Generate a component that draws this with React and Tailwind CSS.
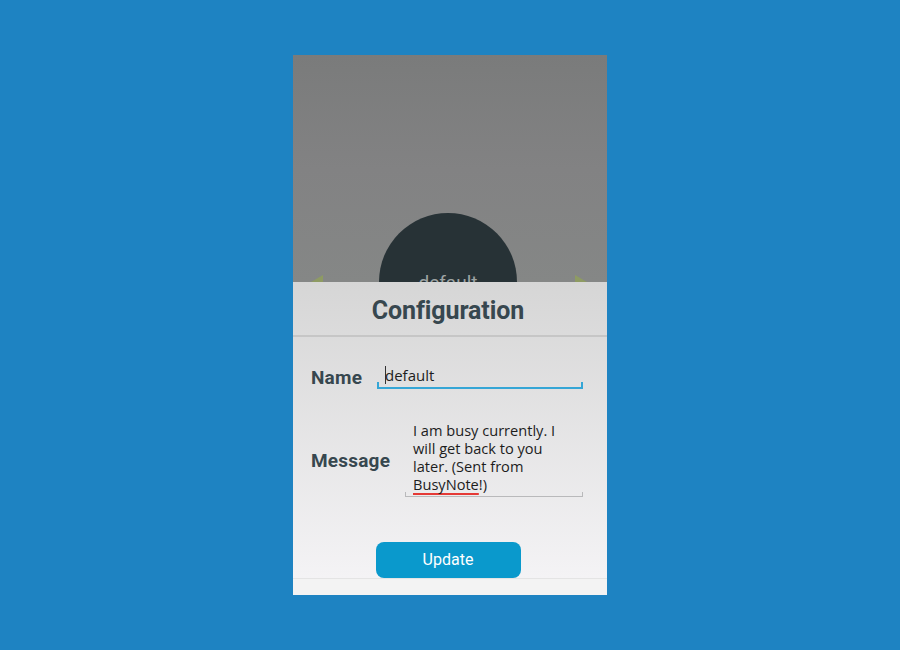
export default function App() {
  return (
    <div className="w-[900px] h-[650px] bg-[#1e83c2] flex items-center justify-center" style={{ fontFamily: 'Roboto, "Noto Sans", sans-serif' }}>
      <div className="w-[314px] h-[540px] flex flex-col bg-[#f3f3f4]">
        {/* top preview */}
        <div className="relative h-[227px] overflow-hidden bg-gradient-to-b from-[#7a7b7b] via-[#828283] to-[#858786] flex items-end justify-center pr-[4px]">
          <div className="w-[138px] h-[138px] rounded-full bg-[#273236] mb-[-69px] flex items-center justify-center">
            <span className="text-[19px] text-[#9ea4a4] mt-[2px]">default</span>
          </div>
          <div className="absolute left-[18px] bottom-0 w-0 h-0 border-y-[7px] border-y-transparent border-r-[12px] border-r-[#8e9b63] mb-[-7px]" />
          <div className="absolute right-[20px] bottom-0 w-0 h-0 border-y-[7px] border-y-transparent border-l-[12px] border-l-[#8e9b63] mb-[-7px]" />
        </div>

        {/* dialog */}
        <div className="h-[296px] flex flex-col bg-gradient-to-b from-[#d6d6d6] to-[#f4f3f5]">
          <div className="h-[55px] flex items-center justify-center border-b-2 border-[#c6c6c6] pr-[4px]">
            <h1 className="text-[25px] font-bold text-[#37474f] tracking-[-0.1px] mt-[4px]">Configuration</h1>
          </div>

          <div className="flex items-end pl-[18px] pr-[24px] mt-[24px]">
            <span className="w-[66px] text-[19px] font-bold text-[#37474f] mb-[-3px] tracking-[0.2px]">Name</span>
            <div className="flex-1 relative border-b-2 border-[#35a6d6] h-[28px] flex items-center pl-[8px]">
              <span className="w-px h-[18px] bg-[#333] mr-[-1px] mt-[2px]" />
              <span className="text-[15px] text-[#1d1d1d] mt-[3px]" style={{ fontFamily: '"Open Sans", "Noto Sans", sans-serif' }}>default</span>
              <span className="absolute left-0 bottom-0 w-[2px] h-[5px] bg-[#35a6d6]" />
              <span className="absolute right-0 bottom-0 w-[2px] h-[5px] bg-[#35a6d6]" />
            </div>
          </div>

          <div className="flex items-center pl-[18px] pr-[24px] mt-[32px]">
            <span className="w-[94px] text-[19px] font-bold text-[#37474f] pt-[4px] tracking-[0.2px]">Message</span>
            <div className="flex-1 relative border-b border-[#b9b9bb] pl-[8px] pb-[3px]">
              <p className="text-[14.6px] leading-[18px] text-[#1d1d1d] w-[160px]" style={{ fontFamily: '"Open Sans", "Noto Sans", sans-serif' }}>
                I am busy currently. I will get back to you later. (Sent from{' '}
                <span className="underline decoration-[#e53935] decoration-2 underline-offset-[3px] [text-decoration-skip-ink:none]">BusyNote</span>!)
              </p>
              <span className="absolute left-0 bottom-0 w-px h-[4px] bg-[#b9b9bb]" />
              <span className="absolute right-0 bottom-0 w-px h-[4px] bg-[#b9b9bb]" />
            </div>
          </div>

          <div className="flex justify-center mt-auto pr-[4px]">
            <button className="w-[145px] h-[36px] rounded-[8px] bg-[#0a99cc] text-white text-[16px]">Update</button>
          </div>
        </div>

        <div className="flex-1 bg-[#f3f3f3] border-t border-[#e4e4e4]" />
      </div>
    </div>
  );
}
